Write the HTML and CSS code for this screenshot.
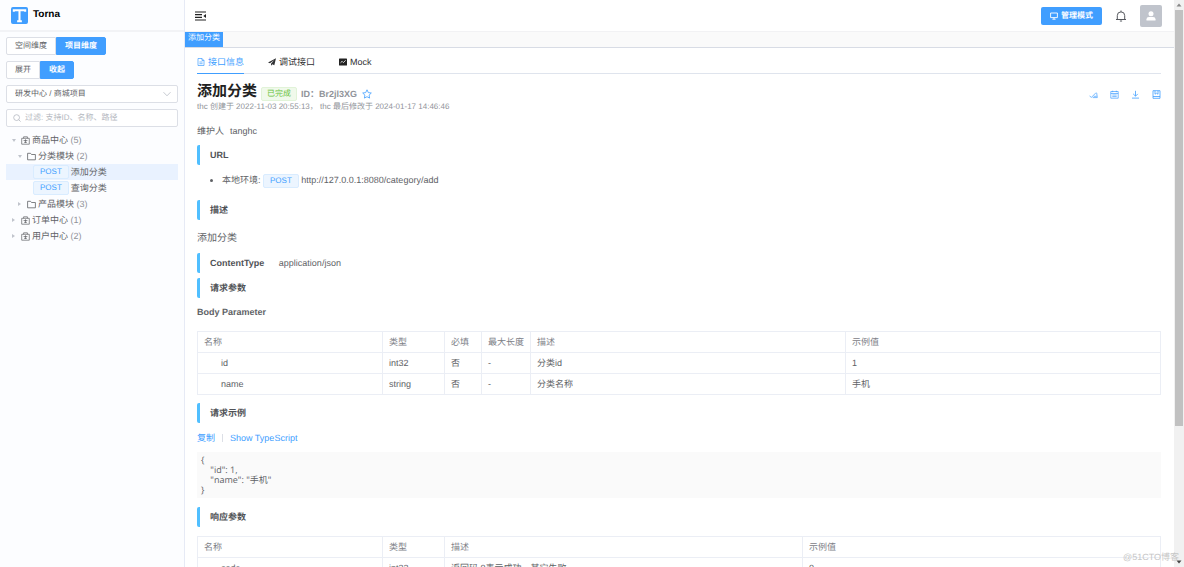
FILE: index.html
```html
<!DOCTYPE html>
<html lang="zh-CN">
<head>
<meta charset="utf-8">
<title>Torna</title>
<link rel="stylesheet" href="styles.css">
</head>
<body>
<div class="app">
  <aside class="sidebar">
    <div class="brand">
      <svg class="logo" viewBox="0 0 18 18"><rect width="18" height="18" rx="2" fill="#409eff"/><path d="M3 5V3.500h12V5M9 3.500V15M6.500 15h5" fill="none" stroke="#fff" stroke-width="2.200"/></svg>
      <span>Torna</span>
    </div>
    <div class="filters">
      <div class="segment"><button type="button">空间维度</button><button type="button" class="on">项目维度</button></div>
      <div class="segment"><button type="button">展开</button><button type="button" class="on">收起</button></div>
      <div class="field">
        <select aria-label="项目"><option>研发中心 / 商城项目</option></select>
        <svg class="chevron" viewBox="0 0 8 8"><path d="M.5 2.200 4 5.800l3.500-3.600" fill="none" stroke="#c0c4cc" stroke-width=".9"/></svg>
      </div>
      <div class="field">
        <svg class="search" viewBox="0 0 8 8"><circle cx="3.600" cy="3.600" r="2.900" fill="none" stroke="#b4b8c0" stroke-width=".8"/><path d="m5.700 5.700 1.900 1.900" stroke="#b4b8c0" stroke-width=".8"/></svg>
        <input class="query" type="text" aria-label="过滤" placeholder="过滤: 支持ID、名称、路径">
      </div>
    </div>
    <ul class="tree">
      <li class="node"><i class="caret open"></i><svg class="ico" viewBox="0 0 9 9"><use href="#box"/></svg>商品中心 <small>(5)</small></li>
      <li class="node child"><i class="caret open"></i><svg class="ico" viewBox="0 0 9 9"><use href="#folder"/></svg>分类模块 <small>(2)</small></li>
      <li class="node leaf active"><span class="method">POST</span>添加分类</li>
      <li class="node leaf"><span class="method">POST</span>查询分类</li>
      <li class="node child"><i class="caret"></i><svg class="ico" viewBox="0 0 9 9"><use href="#folder"/></svg>产品模块 <small>(3)</small></li>
      <li class="node"><i class="caret"></i><svg class="ico" viewBox="0 0 9 9"><use href="#box"/></svg>订单中心 <small>(1)</small></li>
      <li class="node"><i class="caret"></i><svg class="ico" viewBox="0 0 9 9"><use href="#box"/></svg>用户中心 <small>(2)</small></li>
    </ul>
  </aside>

  <main class="main">
    <header class="topbar">
      <button type="button" class="plain" aria-label="折叠菜单"><svg class="fold" viewBox="0 0 11 10"><path d="M0 1h11M0 3.700h7M0 6.300h7M0 9h11" stroke="#222" stroke-width="1.200"/><path d="M11 3v4L8.300 5z" fill="#222"/></svg></button>
      <div class="user">
        <button type="button" class="admin"><svg class="screen" viewBox="0 0 8 8"><path d="M.6 1h6.800v4.600H.6zM2.400 7.200h3.200M4 5.600v1.600" fill="none" stroke="#fff" stroke-width=".9"/></svg>管理模式</button>
        <button type="button" class="plain" aria-label="通知"><svg class="bell" viewBox="0 0 12 12"><path d="M1 9.500h10M2.300 9.500V5.600a3.700 3.700 0 0 1 7.400 0v3.900M6 .5v1.400M4.900 11h2.200" fill="none" stroke="#55585e" stroke-width="1"/></svg></button>
        <span class="avatar"><svg viewBox="0 0 10 10"><circle cx="5" cy="2.700" r="2.500" fill="#fff"/><path d="M.5 9.500V8.300Q.5 6 3 6h4q2.500 0 2.500 2.300v1.200z" fill="#fff"/></svg></span>
      </div>
    </header>
    <div class="tags"><a href="#" class="tag">添加分类</a></div>

    <section class="content">
      <nav class="tabs">
        <button type="button" class="tab on"><svg class="ti" viewBox="0 0 8 8"><path d="M1 .5h4l2 2v5H1zM5 .5v2h2M2.400 4h3.200M2.400 5.700h3.200" fill="none" stroke="#409eff" stroke-width=".7"/></svg>接口信息</button>
        <button type="button" class="tab"><svg class="ti" viewBox="0 0 8 8"><path d="M8 .3 0 4.400l2 .9L6.300 2 3 5.700v2l1.300-1.400 2 .9z" fill="#303133"/></svg>调试接口</button>
        <button type="button" class="tab"><svg class="ti" viewBox="0 0 8 8"><rect y=".4" width="8" height="7.200" rx=".6" fill="#222"/><path d="m1.500 4.800 1.600-1.500 1.300 1.300 2.200-2.300" fill="none" stroke="#fff" stroke-width=".8"/></svg>Mock</button>
      </nav>

      <div class="heading">
        <div>
          <div class="titleline">
            <h1>添加分类</h1><span class="status">已完成</span><b class="docid">ID：Br2jl3XG</b>
            <svg class="star" viewBox="0 0 10 10"><path d="m5 .8 1.300 2.800 3 .4-2.200 2.100.5 3L5 7.700 2.400 9.100l.5-3L.7 4l3-.4z" fill="none" stroke="#409eff" stroke-width=".8" stroke-linejoin="round"/></svg>
          </div>
          <p class="meta">thc 创建于 2022-11-03 20:55:13， thc 最后修改于 2024-01-17 14:46:46</p>
        </div>
        <div class="actions">
          <button type="button" class="plain" aria-label="订阅"><svg viewBox="0 0 9 9"><path d="m.5 5.700 1.800 1.800 4.900-5M3.700 7.600h4.600L7.700 3M4.700 6.300h3" fill="none" stroke="#409eff" stroke-width=".7"/></svg></button>
          <button type="button" class="plain" aria-label="历史"><svg viewBox="0 0 9 9"><path d="M.8 1.500h7.400v6.700H.8zM.8 3.500h7.400M2.700.7v1.500M6.300.7v1.500M2.300 5h4.400M2.300 6.600h4.400" fill="none" stroke="#409eff" stroke-width=".7"/></svg></button>
          <button type="button" class="plain" aria-label="导出"><svg viewBox="0 0 9 9"><path d="M1 8.100h7M4.500.8v5.300M2.200 3.900l2.300 2.300 2.300-2.300" fill="none" stroke="#409eff" stroke-width=".8"/></svg></button>
          <button type="button" class="plain" aria-label="字典"><svg viewBox="0 0 9 9"><path d="M1 .7h7v7.600H1zM1 6.500h7M3 .7v3.500l1.500-1L6 4.200V.7" fill="none" stroke="#409eff" stroke-width=".8"/></svg></button>
        </div>
      </div>

      <p class="owner"><span>维护人</span><span>tanghc</span></p>
      <h2>URL</h2>
      <ul class="urls"><li>本地环境: <span class="method">POST</span> http://127.0.0.1:8080/category/add</li></ul>
      <h2>描述</h2>
      <p class="desc">添加分类</p>
      <h2>ContentType <span class="value">application/json</span></h2>
      <h2 class="near">请求参数</h2>
      <h3>Body Parameter</h3>
      <table>
        <colgroup><col class="c-name"><col class="c-type"><col class="c-req"><col class="c-len"><col><col></colgroup>
        <thead><tr><th>名称</th><th>类型</th><th>必填</th><th>最大长度</th><th>描述</th><th>示例值</th></tr></thead>
        <tbody>
          <tr><td class="key">id</td><td>int32</td><td>否</td><td>-</td><td>分类id</td><td>1</td></tr>
          <tr><td class="key">name</td><td>string</td><td>否</td><td>-</td><td>分类名称</td><td>手机</td></tr>
        </tbody>
      </table>
      <h2>请求示例</h2>
      <div class="links"><a href="#">复制</a><i></i><a href="#">Show TypeScript</a></div>
      <pre>{
    "id": 1,
    "name": "手机"
}</pre>
      <h2>响应参数</h2>
      <table>
        <colgroup><col class="c-name"><col class="c-type"><col><col></colgroup>
        <thead><tr><th>名称</th><th>类型</th><th>描述</th><th>示例值</th></tr></thead>
        <tbody><tr><td class="key">code</td><td>int32</td><td>返回码,0表示成功，其它失败</td><td>0</td></tr></tbody>
      </table>
    </section>
  </main>

  <div class="scroll">
    <svg viewBox="0 0 10 10"><path d="m2.500 6.500 2.500-3 2.500 3z" fill="#888"/></svg>
    <div class="track"><div class="thumb"></div></div>
    <svg viewBox="0 0 10 10"><path d="m2.500 3.500 2.500 3 2.500-3z" fill="#444"/></svg>
  </div>
  <div class="watermark">@51CTO博客</div>
</div>

<svg class="defs" aria-hidden="true">
  <symbol id="box" viewBox="0 0 9 9"><path d="M.7 2.300h7.600v5.900H.7zM2.600 2.300V.8h3.800v1.500M2.600 4.500h3.800M4.500 3.300v3.700M3 6.300h3" fill="none" stroke="#606266" stroke-width=".7"/></symbol>
  <symbol id="folder" viewBox="0 0 9 9"><path d="M.6 1.300h2.900l1 1.200h3.900v5.300H.6z" fill="none" stroke="#606266" stroke-width=".8"/></symbol>
</svg>
</body>
</html>
```
FILE: styles.css
```css
* { box-sizing: border-box; }
body, h1, h2, h3, p, ul, pre { margin: 0; padding: 0; }
body {
  font: 9px/16px "Liberation Sans", "Noto Sans CJK SC", sans-serif;
  text-rendering: geometricPrecision;
  color: #606266;
  background: #fff;
  overflow: hidden;
}
button, input, select { font: inherit; color: inherit; margin: 0; text-rendering: inherit; }
button { cursor: pointer; }
a { color: #409eff; text-decoration: none; }
svg { display: block; flex: none; }
.defs { position: absolute; width: 0; height: 0; }
.plain { border: 0; padding: 0; background: none; }

.app {
  position: relative;
  display: grid;
  grid-template-columns: 185px minmax(0, 1fr) 10px;
  grid-template-rows: minmax(0, 1fr);
  height: 100vh;
  overflow: hidden;
}

/* Sidebar */
.sidebar { background: #fcfdff; border-right: 1px solid #e6eaf5; }
.brand {
  display: flex;
  align-items: center;
  gap: 5px;
  height: 32px;
  padding-left: 11px;
  border-bottom: 2px solid #f2f3f6;
  color: #000;
  font-size: 10px;
  font-weight: bold;
}
.logo { width: 17px; height: 17px; }
.filters { display: flex; flex-direction: column; gap: 6px; padding: 5px 6px 0; font-size: 8px; }
.segment { display: flex; }
.segment button {
  height: 18px;
  padding: 0 8px;
  border: 1px solid #dcdfe6;
  border-radius: 2px 0 0 2px;
  background: #fff;
  line-height: 14px;
}
.segment .on { border-color: #409eff; border-radius: 0 2px 2px 0; background: #409eff; color: #fff; font-weight: bold; }
.field {
  display: flex;
  align-items: center;
  height: 18px;
  border: 1px solid #dcdfe6;
  border-radius: 2px;
  background: #fff;
  padding: 0 6px;
}
.field select, .field input {
  flex: 1;
  min-width: 0;
  height: 14px;
  padding: 0 2px;
  border: 0;
  outline: 0;
  background: none;
  line-height: 14px;
  appearance: none;
}
.field input { padding: 0 4px; }
.field input::placeholder { color: #b4b8c0; }
.chevron, .search { width: 8px; height: 8px; }

.tree { list-style: none; padding: 5px 6px 0; }
.node { display: flex; align-items: center; height: 16px; padding-left: 6px; white-space: pre; }
.node small { color: #909399; font-size: 9px; }
.child { padding-left: 12px; }
.leaf { gap: 2px; padding-left: 27px; }
.active { background: #e9f2ff; }
.ico { width: 9px; height: 9px; margin: 0 2px 0 6px; }
.caret { width: 3px; height: 4px; border: 2px solid transparent; border-left: 3px solid #c0c4cc; border-right: 0; }
.caret.open { width: 4px; height: 3px; margin-right: -1px; border: 2px solid transparent; border-top: 3px solid #c0c4cc; border-bottom: 0; }
.method {
  display: inline-block;
  height: 14px;
  padding: 0 6px;
  border: 1px solid #d9ecff;
  border-radius: 2px;
  background: #ecf5ff;
  color: #409eff;
  font-size: 8px;
  line-height: 12px;
}

/* Top bar */
.topbar {
  display: flex;
  align-items: center;
  justify-content: space-between;
  height: 31px;
  padding: 0 12px 0 10px;
}
.fold { width: 11px; height: 10px; }
.user { display: flex; align-items: center; gap: 13px; }
.admin {
  display: flex;
  align-items: center;
  gap: 3px;
  height: 18px;
  padding: 0 9px;
  border: 0;
  border-radius: 2px;
  background: #409eff;
  color: #fff;
  font-size: 8px;
  font-weight: bold;
}
.screen { width: 8px; height: 8px; }
.bell { width: 12px; height: 12px; }
.avatar { display: grid; place-items: center; width: 22px; height: 22px; border-radius: 2px; background: #c0c4cc; }
.avatar svg { width: 10px; height: 10px; }
.tags { display: flex; height: 17px; border-top: 1px solid #f2f2f4; border-bottom: 1px solid #d8dce5; background: #fafafa; }
.tag { padding: 0 3px; background: #409eff; color: #fff; font-size: 8px; line-height: 12px; }

/* Document */
.content { padding: 3px 13px 0 12px; }
.tabs { display: flex; gap: 24px; border-bottom: 1px solid #dfe4ed; }
.tab {
  display: flex;
  align-items: center;
  gap: 3px;
  height: 23px;
  margin-bottom: -1px;
  padding: 0;
  border: 0;
  border-bottom: 1px solid transparent;
  background: none;
  color: #303133;
}
.tab.on { border-color: #409eff; color: #409eff; }
.ti { width: 8px; height: 8px; }
.heading { display: flex; justify-content: space-between; padding-top: 8px; }
.titleline { display: flex; align-items: center; height: 20px; }
h1 { color: #222; font-size: 15px; line-height: 20px; }
.status {
  height: 14px;
  margin: 4px 4px 0 4px;
  padding: 0 5px;
  border: 1px solid #e1f3d8;
  border-radius: 2px;
  background: #f0f9eb;
  color: #67c23a;
  font-size: 8px;
  line-height: 12px;
}
.docid { margin-top: 4px; color: #909399; }
.star { width: 10px; height: 10px; margin: 3px 0 0 5px; }
.meta { color: #909399; font-size: 8px; line-height: 10px; }
.actions { display: flex; align-items: center; gap: 12px; height: 24px; }
.actions svg { width: 9px; height: 9px; }
.owner { display: flex; gap: 6px; margin: 11px 0 6px; }
h2 {
  height: 20px;
  margin-bottom: 9px;
  padding-left: 10px;
  border-left: 3px solid #50bfff;
  border-radius: 2px;
  color: #505256;
  font-size: 9px;
  line-height: 20px;
}
.value { margin-left: 12px; color: #606266; font-weight: normal; }
.urls { margin: -2px 0 12px; padding-left: 25px; }
.urls li { padding-top: 1px; line-height: 14px; }
.urls .method { vertical-align: middle; }
.desc { margin: 11px 0 6px; font-size: 10px; }
.near { margin-top: -4px; }
h3 { margin: -3px 0 11px; font-size: 9px; line-height: 16px; }
table { width: 100%; margin-bottom: 8px; border-collapse: collapse; table-layout: fixed; }
th, td { height: 21px; padding: 0 6px; border: 1px solid #ebeef5; text-align: left; font-weight: normal; line-height: 16px; }
th { color: #7d8087; }
.key { padding-left: 23px; }
.c-name { width: 185px; }
.c-type { width: 62px; }
.c-req { width: 37px; }
.c-len { width: 49px; }
.links { display: flex; align-items: center; gap: 7px; margin-top: -2px; }
.links i { width: 1px; height: 8px; background: #dcdfe6; }
pre {
  margin: 6px 0 9px;
  padding: 3px 4px;
  background: #fafafa;
  font: 9px/10px "Open Sans", "Noto Sans CJK SC", sans-serif;
}

/* Scroll rail */
.scroll { display: flex; flex-direction: column; background: #f1f1f1; }
.track { flex: 1; padding: 0 1px; }
.thumb { height: 76%; background: #c1c1c1; }
.watermark { position: absolute; right: 5px; bottom: 2px; color: #c6c6c6; font-size: 9px; }
```
